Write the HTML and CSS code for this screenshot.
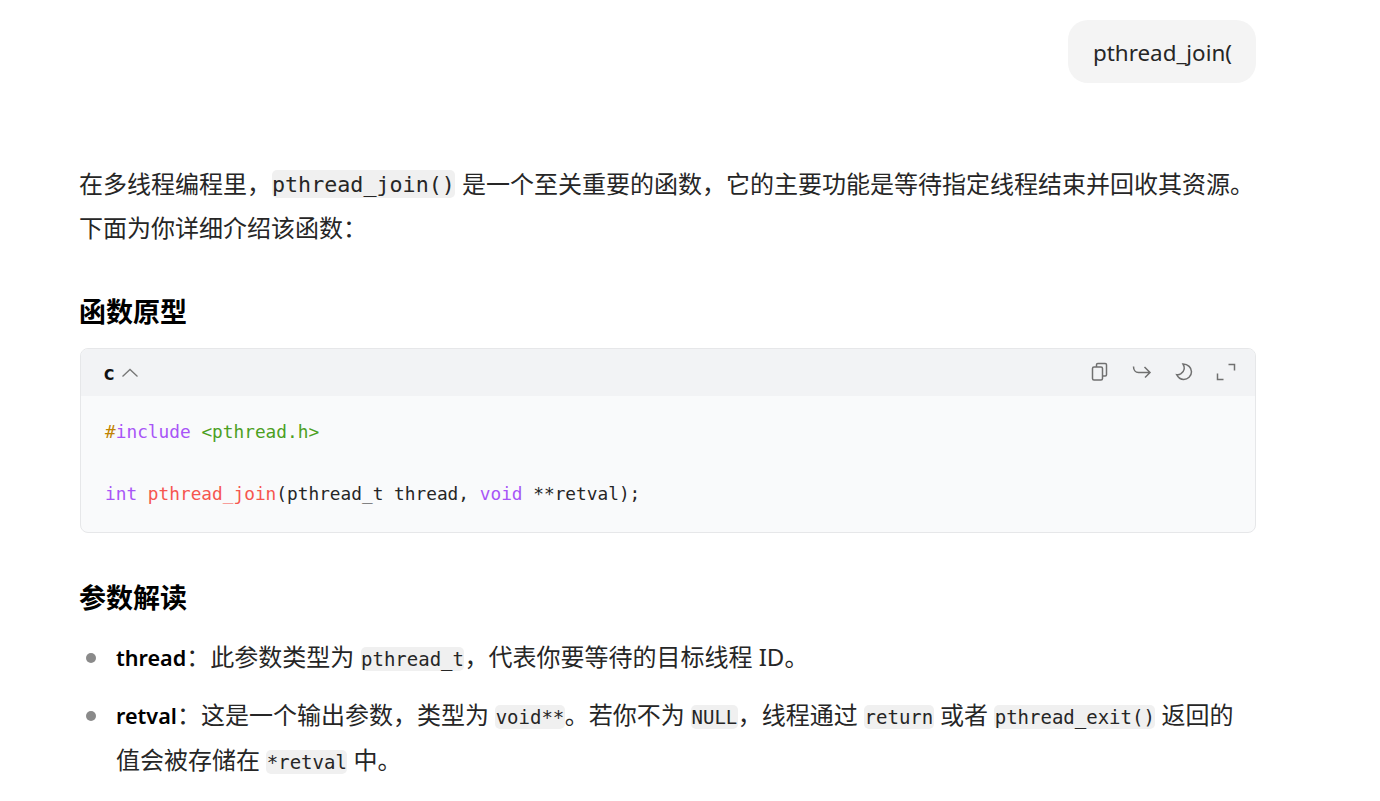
FILE: index.html
```html
<!DOCTYPE html>
<html>

	<head>
		<meta charset="UTF-8">
		<title>pthread_join</title>
		<link rel="stylesheet" href="styles.css">
	</head>

	<body>
		<div id="chat">
			<div class="question">
				<div class="bubble">pthread_join(</div>
			</div>

			<div class="answer">
				<p class="intro">在多线程编程里，<code>pthread_join()</code> 是一个至关重要的函数，它的主要功能是等待指定线程结束并回收其资源。下面为你详细介绍该函数：</p>

				<h3 class="title">函数原型</h3>

				<div class="codebox">
					<div class="codebar">
						<div class="lang">
							<span>c</span>
							<svg class="arrow" width="18" height="18" viewBox="0 0 18 18"><path d="M1.5 12.5 9 5.5l7.5 7" fill="none" stroke="#777" stroke-width="1.3"/></svg>
						</div>
						<div class="tools">
							<svg width="18" height="19" viewBox="0 0 18 19" fill="none" stroke="#707070" stroke-width="1.5"><rect x="1.5" y="5" width="10" height="13" rx="1.5"/><path d="M5.500 5V2.800C5.500 1.900 6 1.500 6.800 1.500h7.400c.8 0 1.300.4 1.300 1.300v10c0 .8-.5 1.200-1.300 1.200H11.500"/></svg>
							<svg width="20" height="18" viewBox="0 0 20 18" fill="none" stroke="#707070" stroke-width="1.5"><path d="M1.500 3.500c0 3.500 2 6 5 6h11M12.500 4l5.500 5.500-5 5"/></svg>
							<svg width="18" height="18" viewBox="0 0 18 18" fill="none" stroke="#707070" stroke-width="1.5"><path d="M8 1c2.200 3.500 1.500 7-2 9.700-1.500 1-2.800 1.300-4.300 1 1.500 3 4 4.800 7 4.800 4 0 7.800-3.300 7.800-7.700C16.500 4.800 13 1 8 1z"/></svg>
							<svg width="20" height="18" viewBox="0 0 20 18" fill="none" stroke="#707070" stroke-width="1.5"><path d="M12.500 1.500h6v6M1.500 10.500v6h6"/></svg>
						</div>
					</div>
					<pre class="codebody"><span class="meta">#</span><span class="kw">include</span> <span class="str">&lt;pthread.h&gt;</span>

<span class="kw">int</span> <span class="fn">pthread_join</span>(pthread_t thread, <span class="kw">void</span> **retval);</pre>
				</div>

				<h3 class="title">参数解读</h3>

				<ul class="params">
					<li><strong>thread</strong>：此参数类型为 <code>pthread_t</code>，代表你要等待的目标线程 ID。</li>
					<li><strong>retval</strong>：这是一个输出参数，类型为 <code>void**</code>。若你不为 <code>NULL</code>，线程通过 <code>return</code> 或者 <code>pthread_exit()</code> 返回的值会被存储在 <code>*retval</code> 中。</li>
				</ul>
			</div>
		</div>
	</body>

</html>
```

FILE: styles.css
```css
html,
body,
h3,
p,
ul,
li,
pre {
	margin: 0;
	padding: 0;
}

body {
	background-color: #fff;
	color: #262626;
	font-family: "Noto Sans", "Noto Sans CJK SC", sans-serif;
	font-size: 24px;
	line-height: 44px;
}

#chat {
	width: 1176px;
	margin-left: 80px;
	padding-top: 20px;
}

.question {
	display: flex;
	justify-content: flex-end;
}

.bubble {
	height: 63px;
	font-size: 22.4px;
	line-height: 65px;
	padding: 0 24px 0 25px;
	border-radius: 20px;
	background-color: #f4f4f4;
}

.answer {
	padding-top: 79px;
}

code {
	font-family: "DejaVu Sans Mono", "Noto Sans CJK SC", monospace;
	font-size: 19px;
	line-height: 1;
	padding: 1px .5px;
	border-radius: 5px;
	background-color: #f0f0f0;
}

.intro {
	height: 88px;
	margin-left: -1px;
}

.intro code {
	font-size: 21.7px;
	padding: 1.5px 0;
	margin: 0 1px;
	vertical-align: 2px;
}

.title {
	margin-top: 40px;
	margin-left: -1px;
	color: #000;
	font-size: 27px;
	line-height: 44px;
	font-weight: bold;
}

.codebox {
	margin: 14px 0 43px;
	border: 1px solid #e6e7e9;
	border-radius: 8px;
	overflow: hidden;
	background-color: #f9fafb;
}

.codebar {
	display: flex;
	justify-content: space-between;
	align-items: center;
	height: 47px;
	padding: 0 19px 0 22px;
	background-color: #f2f3f5;
}

.lang {
	display: flex;
	align-items: center;
	gap: 6px;
	color: #111;
	font-family: "DejaVu Sans Mono", monospace;
	font-size: 20px;
	font-weight: bold;
}

.tools {
	display: flex;
	align-items: center;
	gap: 23px;
	margin-top: -2px;
}

.codebody {
	padding: 20px 24px 23px;
	color: #262626;
	font-family: "DejaVu Sans Mono", monospace;
	font-size: 17.8px;
	line-height: 31px;
}

.meta {
	color: #c18401;
}

.kw {
	color: #a855f7;
}

.str {
	color: #4ca01f;
}

.fn {
	color: #f6564f;
}

.params {
	list-style: none;
	margin-top: 15px;
}

.params li {
	position: relative;
	padding-left: 36px;
	margin-bottom: 13px;
}

.params li::before {
	content: "";
	position: absolute;
	left: 6px;
	top: 18px;
	width: 10px;
	height: 10px;
	border-radius: 50%;
	background-color: #8a8a8a;
}

.params strong {
	color: #000;
	font-size: 21.6px;
	font-weight: 600;
}
```
